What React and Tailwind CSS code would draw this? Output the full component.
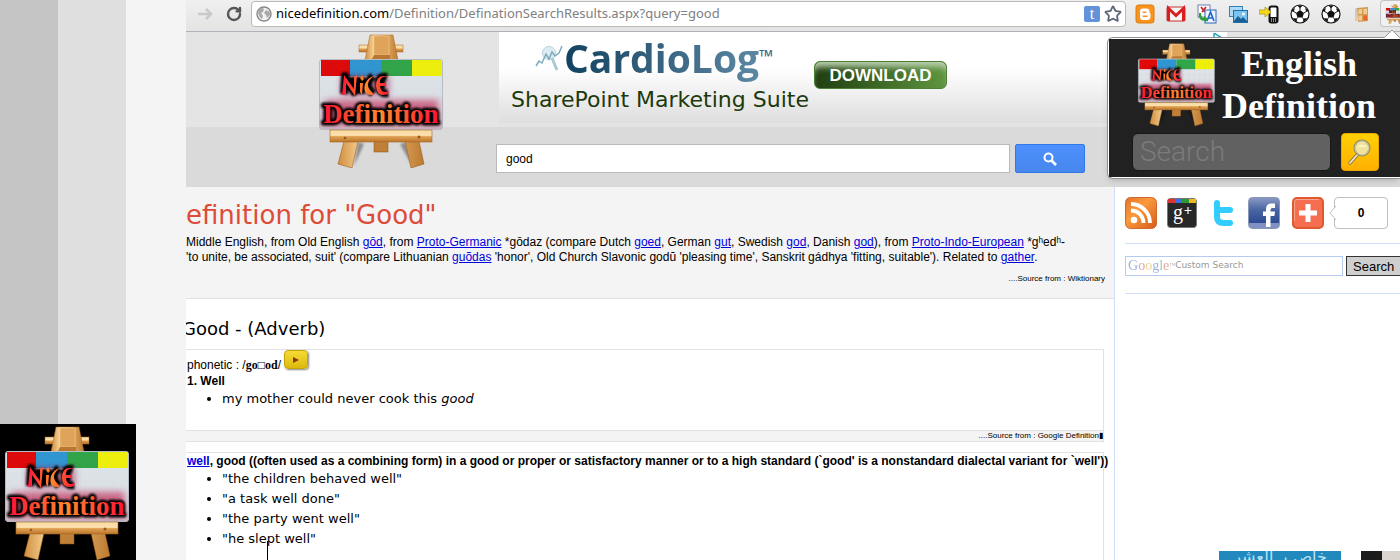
import React, { useId } from "react";
import { Star, RotateCw } from "lucide-react";

const verdana = "font-['DejaVu_Sans',Verdana,sans-serif]";
const blackletter = "font-['Old_English_Text_MT','Liberation_Serif',serif]";

function Easel({ className }) {
  const id = useId().replace(/[^a-zA-Z0-9]/g, "");
  const u = (n) => `url(#${id}${n})`;
  return (
    <svg viewBox="0 0 136 136" className={className} role="img" aria-label="Nice Definition">
      <defs>
        <linearGradient id={id + "w"} x1="0" x2="1" y1="0" y2="0">
          <stop offset="0" stopColor="#d08d3e" />
          <stop offset=".3" stopColor="#fbdda2" />
          <stop offset=".6" stopColor="#e8b06a" />
          <stop offset="1" stopColor="#bb7a30" />
        </linearGradient>
        <linearGradient id={id + "t"} x1="0" x2="0" y1="0" y2="1">
          <stop offset="0" stopColor="#f8d9a0" />
          <stop offset=".45" stopColor="#fbe0ae" />
          <stop offset=".55" stopColor="#dfa153" />
          <stop offset="1" stopColor="#bb7529" />
        </linearGradient>
        <linearGradient id={id + "r"} x1="0" x2="1" y1="0" y2="0">
          <stop offset="0" stopColor="#ff1235" />
          <stop offset=".5" stopColor="#ff8a2b" />
          <stop offset="1" stopColor="#ff1235" />
        </linearGradient>
        <linearGradient id={id + "b"} x1="0" x2="0" y1="0" y2="1">
          <stop offset="0" stopColor="#e2e9ed" />
          <stop offset=".5" stopColor="#dfe2e8" />
          <stop offset="1" stopColor="#d3b4c1" />
        </linearGradient>
        <pattern id={id + "g"} width="2" height="2" patternUnits="userSpaceOnUse">
          <path d="M0 0H2M0 0V2" stroke="#6b7c88" strokeOpacity=".12" strokeWidth=".6" />
        </pattern>
        <filter id={id + "f"} x="-20%" y="-50%" width="140%" height="200%">
          <feGaussianBlur stdDeviation="1.3" />
        </filter>
        <filter id={id + "p"} x="-20%" y="-50%" width="140%" height="200%">
          <feGaussianBlur stdDeviation="3" />
        </filter>
      </defs>
      <path d="M44 110L40 134L50 112zM92 110L98 134L86 112z" fill="#000" opacity=".35" filter={u("f")} />
      <rect x="45" y="13" width="44" height="7" fill={u("t")} stroke="#a5672a" strokeWidth=".5" />
      <path d="M56 3L79 3L84 28L51 28z" fill={u("w")} stroke="#a5672a" strokeWidth=".5" />
      <path d="M60 4H75V23H60z" fill="#dfa35a" stroke="#f5cf90" strokeWidth=".6" />
      <path d="M60 23H76V27H58z" fill="#b97733" />
      <path d="M30 109H44L38 136L24 132zM91 109H105L110 132L97 136z" fill={u("w")} stroke="#8c5216" strokeWidth=".5" />
      <rect x="60" y="108" width="14" height="12" fill="#c08038" stroke="#8c5216" strokeWidth=".5" />
      <rect x="5.500" y="27.500" width="123" height="70" rx="2.500" fill={u("b")} stroke="#b4bcc4" />
      <path d="M7 28H36V44H7z" fill="#e40404" />
      <path d="M36 28H67V44H36z" fill="#2d96d4" />
      <path d="M67 28H98V44H67z" fill="#2fa646" />
      <path d="M98 28H128V44H98z" fill="#f2f205" />
      <rect x="6" y="28" width="122" height="69" fill={u("g")} />
      <path d="M12 68H124V92H12z" fill="#c22253" opacity=".6" filter={u("p")} />
      <path d="M27 44H75V63H27z" fill="#a01040" opacity=".5" filter={u("p")} />
      <g fill="none" stroke="#000" strokeLinejoin="round" filter={u("f")}>
        <path d="M30 62L31 44L40 60L41 45M47 45V62M59 44Q49 52 59 62M73 45Q64 43 65 52Q65 63 74 61M64 52H71" strokeWidth="8" />
        <text x="9" y="91" fontSize="27" fontWeight="700" fontFamily="'Old English Text MT','Liberation Serif',serif" strokeWidth="5" aria-hidden="true">Definition</text>
      </g>
      <path d="M28 63L30 43L40 57L40 45L43 43L41 64L32 51L32 62zM46 51H49L48 63L46 60zM46 46L48 43L50 47L48 49zM60 44Q49 52 58 60L60 63Q48 64 51 52Q54 45 60 44zM75 45Q65 43 66 52Q66 63 75 59L74 62Q63 66 62 54Q62 41 75 45zM64 51H72L71 54H64z" fill={u("r")} />
      <text x="9" y="91" fontSize="27" fontWeight="700" fontFamily="'Old English Text MT','Liberation Serif',serif" fill={u("r")}>Definition</text>
      <rect x="16" y="98" width="102" height="12" fill={u("t")} stroke="#a5672a" strokeWidth=".6" />
      <circle cx="31" cy="106" r="1.300" fill="#9b5a1c" />
      <circle cx="105" cy="105" r="1.500" fill="#9b5a1c" />
    </svg>
  );
}

function SoccerBall() {
  return (
    <svg viewBox="0 0 20 20" className="size-5">
      <circle cx="10" cy="10" r="9" fill="#fff" stroke="#111" strokeWidth="1.200" />
      <path d="M10 6l4 3-1.500 4.500h-5L6 9z M7 1.500h6L10 4z M1.300 8L4 7l1-3-3 2zM18.700 8L16 7l-1-3 3 2zM3 14l3 .5 1.500 3.500-3-1.500zM17 14l-3 .5-1.500 3.500 3-1.500z" fill="#111" />
      <path d="M10 6V3M14 9l3-2M12.500 13.500L14 16M7.500 13.500L6 16M6 9L3 7" stroke="#111" />
    </svg>
  );
}

function Extensions() {
  return (
    <div className="mb-1 flex items-center gap-[11px] pl-[9px]">
      <svg viewBox="0 0 20 20" className="size-5">
        <rect x="1" y="1" width="18" height="18" rx="2.500" fill="#f8931d" stroke="#e07b10" />
        <path d="M8 4.500h3.500A3 3 0 0 1 14.500 7.500c0 1.300 .2 1.800 1 2v3a3.500 3.500 0 0 1-3.500 3.500H8A3 3 0 0 1 5 13V7.500a3 3 0 0 1 3-3z" fill="#fff" />
        <path d="M8.200 8.200h2.500M8.200 12.200h3.800" stroke="#f8931d" strokeWidth="1.500" strokeLinecap="round" />
      </svg>
      <svg viewBox="0 0 20 20" className="size-5">
        <rect x="1" y="3" width="18" height="14" rx="1" fill="#f7f4f4" stroke="#c9302c" />
        <path d="M2.500 17V4.500L10 11.500L17.500 4.500V17" fill="none" stroke="#d81e1e" strokeWidth="3" />
      </svg>
      <svg viewBox="0 0 20 20" className="size-5">
        <rect x="1" y="1" width="12" height="12" fill="#fff" stroke="#6b7fae" />
        <path d="M4 3l4 5M9 3L5 8" stroke="#d5222a" strokeWidth="1.800" />
        <rect x="8" y="6" width="11" height="13" fill="#eaf3ff" stroke="#2e66b6" />
        <path d="M10 17l3.500-9L17 17M11.200 14h4.600" fill="none" stroke="#1d63c8" strokeWidth="1.600" />
        <path d="M2 9q-1 8 6 8v2l3-4-4-3v2q-3 0-3-5z" fill="#2e9c3c" />
      </svg>
      <svg viewBox="0 0 20 20" className="size-5">
        <rect x="1.500" y="2.500" width="13" height="10" fill="#aedaf5" stroke="#2f83b9" />
        <rect x="5.500" y="6.500" width="14" height="12" fill="#79c3ee" stroke="#1f6fa8" />
        <path d="M6 17l4-5 3 3 2-2 4 4v1H6z" fill="#1b5f94" />
        <circle cx="15.500" cy="10" r="1.500" fill="#fff" />
      </svg>
      <svg viewBox="0 0 20 20" className="size-5">
        <rect x="10.500" y="2.500" width="8" height="16" rx="2" fill="#fff" stroke="#111" strokeWidth="2" />
        <path d="M10 13h9v5h-9z" fill="#111" />
        <path d="M12 15h1M14 15h1M16 15h1M12 17h1M14 17h1M16 17h1" stroke="#fff" />
        <path d="M0 6h6V3l6 5-6 5v-3H0z" fill="#f8d71c" stroke="#ab8d00" strokeWidth=".7" />
      </svg>
      <SoccerBall />
      <SoccerBall />
      <svg viewBox="0 0 20 20" className="size-5">
        <path d="M5 4l11-1v14l-10 1z" fill="#d39a52" />
        <path d="M6.500 5.500l3.500-.5V10H6.500zM11.500 5l3.500-.3V10h-3.500zM6.500 11.500H10v5H6.500z" fill="#f0cd97" />
        <path d="M11.500 11.500H15v5h-3.500z" fill="#e4662a" />
        <path d="M4 4v13" stroke="#d9c9b2" strokeWidth="2" />
      </svg>
    </div>
  );
}

function BrowserBar() {
  return (
    <div className="flex h-8 shrink-0 items-center overflow-hidden border-b border-[#b0b1b9] bg-linear-to-b from-[#f0f0f0] to-[#e3e3e3] pl-3">
      <svg viewBox="0 0 16 16" className="mb-1 size-4 shrink-0">
        <path d="M0 8h13M8 3l5 5-5 5" fill="none" stroke="#c9c9c9" strokeWidth="2.600" />
      </svg>
      <button aria-label="Reload" className="mb-1 ml-3 shrink-0 text-[#555]">
        <RotateCw size={16} strokeWidth={3.6} />
      </button>
      <div className="mb-1 ml-[9px] flex h-[26px] flex-1 items-center gap-1 rounded border border-[#b9b9b9] bg-white pr-[3px] pl-1">
        <svg viewBox="0 0 16 16" className="size-4 shrink-0">
          <circle cx="8" cy="8" r="7" fill="#f2f2f2" stroke="#888" strokeWidth="1.400" />
          <path d="M3 3q3-2 5 0L7 6 5 7l2 3-1 3q-3-2-4-6zM10 4l4 2v3l-3 3-1-3-2-2z" fill="#a9a9a9" />
        </svg>
        <span className="min-w-0 flex-1 truncate font-['Noto_Sans',sans-serif] text-[13px] text-[#808080]">
          <span className="text-black">nicedefinition.com</span>/Definition/DefinationSearchResults.aspx?query=good
        </span>
        <span className="flex size-4 items-center justify-center rounded-xs bg-[#6292d9] font-['Liberation_Serif',serif] text-base leading-none text-white">t</span>
        <Star size={18} strokeWidth={2.4} className="text-[#5c6678]" />
      </div>
      <Extensions />
      <div className="mb-1 ml-2 flex h-[27px] w-5 shrink-0 justify-start overflow-hidden rounded-l border border-r-0 border-[#c4c4c4] bg-[#f1f1f1] pt-[3px] pl-1">
        <Easel className="size-[20px] shrink-0" />
      </div>
    </div>
  );
}

function Banner() {
  return (
    <div className="flex h-[91px] w-[728px] items-start bg-linear-to-b from-white from-40% to-[#dedede]">
      <div className="w-[315px] pl-3">
        <div className="flex h-[52px] items-center pl-6">
          <svg viewBox="0 0 28 28" className="size-7 shrink-0">
            <circle cx="14" cy="9" r="6.500" fill="#dcecf2" stroke="#b5d2de" />
            <path d="M1 22l3-5 3 2 4-9 3 5 3-7 3 4 4-3 3-7" fill="none" stroke="#7eaabd" strokeWidth="1.500" />
            <path d="M17 14l5 12" stroke="#a9c9d6" strokeWidth="3" />
          </svg>
          <span className="ml-px bg-linear-to-r from-[#10425f] to-[#5d88a4] bg-clip-text font-['Open_Sans',sans-serif] text-[39px] leading-[52px] font-bold text-transparent">CardioLog</span>
          <span className="self-start pt-3 font-['Open_Sans',sans-serif] text-lg leading-6 font-bold text-[#3b6a8a]">™</span>
        </div>
        <p className={`${verdana} text-[22px] leading-8 whitespace-nowrap text-[#1c3a0c]`}>SharePoint Marketing Suite</p>
      </div>
      <button className="mt-[29px] h-7 w-[133px] rounded-md border border-[#4d7f35] bg-linear-to-r from-[#203f10] to-[#5f963f] font-['Liberation_Sans',Arial,sans-serif] text-[17px] leading-none font-bold text-white shadow-[inset_0_8px_6px_-3px_#b9cfae]">DOWNLOAD</button>
      <svg viewBox="0 0 10 10" className="mt-px mr-1 ml-auto size-[10px]">
        <path d="M1 0l8 5-8 4z" fill="#fff" stroke="#25a9c0" strokeWidth="1.500" />
      </svg>
    </div>
  );
}

function SiteHeader() {
  return (
    <header className="flex h-[155px] shrink-0 overflow-hidden bg-linear-to-b from-[#e4e4e4] from-[95px] to-[#dadada] to-[95px] pl-32">
      <Easel className="size-[136px] shrink-0" />
      <div className="ml-[46px] flex flex-col gap-[21px]">
        <div className="pl-[3px]">
          <Banner />
        </div>
        <form className="flex gap-[5px]" onSubmit={(e) => e.preventDefault()}>
          <input aria-label="Word" defaultValue="good" className="h-[29px] w-[514px] border border-[#b9b9b9] bg-white px-[9px] font-['Liberation_Sans',Arial,sans-serif] text-xs text-black" />
          <button aria-label="Look up" className="flex h-[29px] w-[70px] items-center justify-center rounded-xs border border-[#3079ed] bg-linear-to-b from-[#4d90fe] to-[#4787ed]">
            <svg viewBox="0 0 14 14" className="size-[14px]">
              <circle cx="5.500" cy="5.500" r="4" fill="none" stroke="#fff" strokeWidth="2" />
              <path d="M8.500 8.500L13 13" stroke="#fff" strokeWidth="2.600" />
            </svg>
          </button>
        </form>
      </div>
    </header>
  );
}

function ExtensionPopup() {
  return (
    <section className="absolute top-[30px] right-0 w-[293px]">
      <svg viewBox="0 0 16 8" className="ml-auto h-2 w-4">
        <path d="M0 8L8 0L16 8" fill="#fff" stroke="#9a9a9a" />
      </svg>
      <div className="-mt-px rounded-l-md border border-r-0 border-[#8f8f8f] bg-white p-px pr-0 shadow-md">
        <div className="bg-[#212121] pt-[3px] pr-[21px] pb-[6px] pl-[23px]">
          <div className="flex h-[91px]">
            <Easel className="ml-[3px] size-[84px] shrink-0" />
            <h2 className={`${blackletter} flex-1 pt-px text-center text-[36px] leading-[42px] font-bold text-white`}>
              English Definition
            </h2>
          </div>
          <form className="flex items-center gap-[10px]" onSubmit={(e) => e.preventDefault()}>
            <input aria-label="Search a word" placeholder="Search" className="h-[38px] min-w-0 flex-1 rounded-md border border-[#171717] bg-[#616161] px-[7px] font-['Roboto',sans-serif] text-[28px] font-light text-white placeholder:text-[#7b7b7b]" />
            <button aria-label="Search" className="flex size-[38px] items-center justify-center rounded border border-[#e8a900] bg-linear-to-b from-[#ffd005] to-[#ffb000]">
              <svg viewBox="0 0 26 28" className="h-7 w-[26px]">
                <path d="M11 16L3 25" stroke="#8d7c42" strokeWidth="3.500" strokeLinecap="round" />
                <path d="M11 16L3 25" stroke="#eee6c0" strokeWidth="1.800" strokeLinecap="round" />
                <circle cx="15" cy="10" r="7.500" fill="#efe49a" stroke="#8d8561" strokeWidth="2" />
                <circle cx="15" cy="10" r="7" fill="none" stroke="#ded9bd" />
                <path d="M10 9q5-5 10 0z" fill="#fbf5c8" />
              </svg>
            </button>
          </form>
        </div>
      </div>
    </section>
  );
}

function A({ children }) {
  return <a href="#word" className="text-[#0000dd] underline">{children}</a>;
}

function Results() {
  return (
    <main className="min-w-0 flex-1 overflow-hidden font-['Liberation_Sans',Arial,sans-serif] text-xs text-black">
      <section className="h-28 border-b border-[#e2e2e2] bg-[#f4f4f4] pt-[10px]">
        <h1 className={`${verdana} text-[26px] leading-9 text-[#dd4b39]`}>efinition for "Good"</h1>
        <p className="pt-[2px] text-xs leading-[15px] whitespace-nowrap">
          Middle English, from Old English <A>gōd</A>, from <A>Proto-Germanic</A> *gōdaz (compare Dutch <A>goed</A>, German <A>gut</A>, Swedish <A>god</A>, Danish <A>god</A>), from <A>Proto-Indo-European</A> *gʰedʰ-
          <br />
          'to unite, be associated, suit' (compare Lithuanian <A>guõdas</A> 'honor', Old Church Slavonic godŭ 'pleasing time', Sanskrit gádhya 'fitting, suitable'). Related to <A>gather</A>.
        </p>
        <p className="pt-[6px] pr-[9px] text-right text-[8px] leading-4">....Source from : Wiktionary</p>
      </section>
      <h2 className={`${verdana} -indent-1 pt-[18px] pb-2 text-lg leading-6`}>Good - (Adverb)</h2>
      <section className="mr-[10px] border border-l-0 border-[#e2e2e2]">
        <div className="h-20 pl-px">
          <div className="flex h-6 items-start leading-[15px]">
            <p className="pt-2">phonetic : /<b className="font-['Liberation_Serif',serif]">go□od</b>/</p>
            <button aria-label="Play pronunciation" className="ml-[3px] flex h-[19px] w-6 items-center justify-center rounded border border-[#c9a50b] bg-linear-to-b from-[#f5dc33] to-[#dcb90a] shadow-[1px_1px_2px_#888]">
              <svg viewBox="0 0 6 6" className="size-[6px]"><path d="M0 0L6 3L0 6z" fill="#8b3a10" /></svg>
            </button>
          </div>
          <p className="leading-[15px] font-bold">1. Well</p>
          <ul className={`${verdana} list-disc pl-[35px] text-[13px] leading-5`}>
            <li>my mother could never cook this <i>good</i></li>
          </ul>
        </div>
        <p className="border-t border-[#e2e2e2] bg-[#f4f4f4] text-right text-[8px] leading-[10px]">....Source from : Google Definition▮</p>
      </section>
      <section className="mt-[10px] mr-[10px] border border-l-0 border-[#e2e2e2] pl-px">
        <p className="leading-4 font-bold whitespace-nowrap">
          <A>well</A>, good ((often used as a combining form) in a good or proper or satisfactory manner or to a high standard (`good' is a nonstandard dialectal variant for `well'))
        </p>
        <ul className={`${verdana} list-disc pl-[35px] text-[13px] leading-5`}>
          <li>"the children behaved well"</li>
          <li>"a task well done"</li>
          <li>"the party went well"</li>
          <li className="relative">
            "he slept well"
            <span className="absolute top-3 left-[45px] h-8 w-px bg-black" />
          </li>
        </ul>
        <div className="h-8" />
      </section>
    </main>
  );
}

function SocialRow() {
  return (
    <div className="flex h-8 items-center">
      <a href="#rss" aria-label="RSS">
        <svg viewBox="0 0 32 32" className="size-8">
          <defs><linearGradient id="rss" x1="0" y1="0" x2="1" y2="1"><stop offset="0" stopColor="#e1712c" /><stop offset=".4" stopColor="#fb9a3b" /><stop offset="1" stopColor="#d65a1c" /></linearGradient></defs>
          <rect x=".5" y=".5" width="31" height="31" rx="5" fill="url(#rss)" stroke="#cf6a2e" />
          <circle cx="9" cy="23" r="3.300" fill="#fff" />
          <path d="M6 13.500A12.500 12.500 0 0 1 18.500 26M6 7A19 19 0 0 1 25 26" fill="none" stroke="#fff" strokeWidth="3.800" />
        </svg>
      </a>
      <a href="#gplus" aria-label="Google+" className="ml-[10px]">
        <svg viewBox="0 0 30 30" className="size-[30px]">
          <rect x=".5" y=".5" width="29" height="29" rx="3" fill="#282828" stroke="#777" />
          <path d="M1 1h7v4H1z" fill="#d33" /><path d="M8 1h7v4H8z" fill="#3b6fe0" /><path d="M15 1h7v4h-7z" fill="#2a9a34" /><path d="M22 1h7v4h-7z" fill="#efb81c" />
          <text x="6" y="21" fontSize="20" fontFamily="'Liberation Serif',serif" fill="#fff">g</text>
          <path d="M17.500 12.500h7M21 9v7" stroke="#fff" strokeWidth="1.200" />
        </svg>
      </a>
      <a href="#twitter" aria-label="Twitter" className="ml-4">
        <svg viewBox="0 0 22 28" className="h-7 w-[22px]">
          <path d="M4 4V18Q4 24 11 24H17M4 11H17" fill="none" stroke="#33ccff" strokeWidth="6" strokeLinecap="round" />
        </svg>
      </a>
      <a href="#facebook" aria-label="Facebook" className="ml-[13px]">
        <svg viewBox="0 0 32 32" className="size-8">
          <defs><linearGradient id="fb" x1="0" y1="0" x2="0" y2="1"><stop offset="0" stopColor="#8b9ac4" /><stop offset=".4" stopColor="#4a65a3" /><stop offset=".82" stopColor="#2d4b93" /><stop offset=".83" stopColor="#7f92c2" /></linearGradient></defs>
          <rect x=".5" y=".5" width="31" height="31" rx="4" fill="url(#fb)" stroke="#8b97b8" />
          <path d="M18 30V19h-3v-4.500h3V12q0-5.500 5.500-5.500H27V11h-2.500q-2 0-2 2v1.500H27l-.6 4.500h-3.900v11z" fill="#fff" />
        </svg>
      </a>
      <a href="#share" aria-label="Share" className="ml-3">
        <svg viewBox="0 0 32 32" className="size-8">
          <rect x="1" y="1" width="30" height="30" rx="4" fill="#f46e4f" stroke="#e0582f" strokeWidth="2" />
          <path d="M2.500 24V5q0-2.500 2.500-2.500h22" fill="none" stroke="#f9a48d" />
          <path d="M16 7v18M7 16h18" stroke="#fff" strokeWidth="5" />
        </svg>
      </a>
      <div className="relative ml-[10px] flex h-8 w-[54px] items-center justify-center rounded border border-[#bfbfbf] bg-white text-xs font-bold">
        <svg viewBox="0 0 7 14" className="absolute top-2 -left-[6px] h-[14px] w-[7px]">
          <path d="M7 0L1 7L7 14" fill="#fff" stroke="#bfbfbf" />
        </svg>
        0
      </div>
    </div>
  );
}

function Sidebar() {
  return (
    <aside className="flex w-[286px] shrink-0 flex-col border-l border-[#d0defa] pt-[10px] pl-[10px] font-['Liberation_Sans',Arial,sans-serif]">
      <SocialRow />
      <form className="mt-[14px] flex gap-[3px] border-y border-[#d0defa] pt-3 pb-[17px]" onSubmit={(e) => e.preventDefault()}>
        <label className="flex h-5 w-[218px] items-center border border-[#b7cbf0] bg-white pl-[2px]">
          <span className="font-['Liberation_Serif',serif] text-sm leading-none opacity-60">
            <span className="text-[#5a7fd0]">G</span><span className="text-[#d36b6b]">o</span><span className="text-[#d9b94f]">o</span><span className="text-[#5a7fd0]">g</span><span className="text-[#65ab70]">l</span><span className="text-[#d36b6b]">e</span><sup className="text-[6px] text-[#777]">™</sup>
          </span>
          <input aria-label="Custom search" placeholder="Custom Search" className={`${verdana} min-w-0 flex-1 text-[9px] placeholder:text-[#999]`} />
        </label>
        <button className="h-5 min-w-[54px] flex-1 overflow-hidden border border-r-0 border-[#333] bg-[#cfcfcf] text-left indent-[6px] text-[13px] leading-none text-black">Search</button>
      </form>
      <div className="mt-auto flex h-[9px] items-start gap-5 overflow-hidden pl-[94px]">
        <div lang="ar" dir="rtl" className="h-[9px] w-[122px] shrink-0 overflow-hidden bg-[#2189bd] text-center font-['DejaVu_Sans',sans-serif] text-base leading-3 text-[#b8e2f4]">خاص بـ العشر</div>
        <div className="h-[9px] flex-1 border-l-[21px] border-[#1b1b1b] bg-[#d9d5ce]" />
      </div>
    </aside>
  );
}

export default function App() {
  return (
    <div className="relative flex h-screen overflow-hidden bg-white">
      <div className="flex w-[186px] shrink-0 flex-col justify-end bg-linear-to-r from-[#c5c5c5] from-[58px] via-[#dfdfdf] via-[58px] to-[#dfdfdf] to-[126px]">
        <div className="flex min-h-0 flex-1">
          <div className="w-[126px]" />
          <div className="flex-1 bg-[#f4f4f4]" />
        </div>
        <div className="bg-[#f4f4f4]">
          <Easel className="size-[136px] bg-black" />
        </div>
      </div>
      <div className="flex min-w-0 flex-1 flex-col">
        <BrowserBar />
        <SiteHeader />
        <div className="flex min-h-0 flex-1">
          <Results />
          <Sidebar />
        </div>
      </div>
      <ExtensionPopup />
    </div>
  );
}
